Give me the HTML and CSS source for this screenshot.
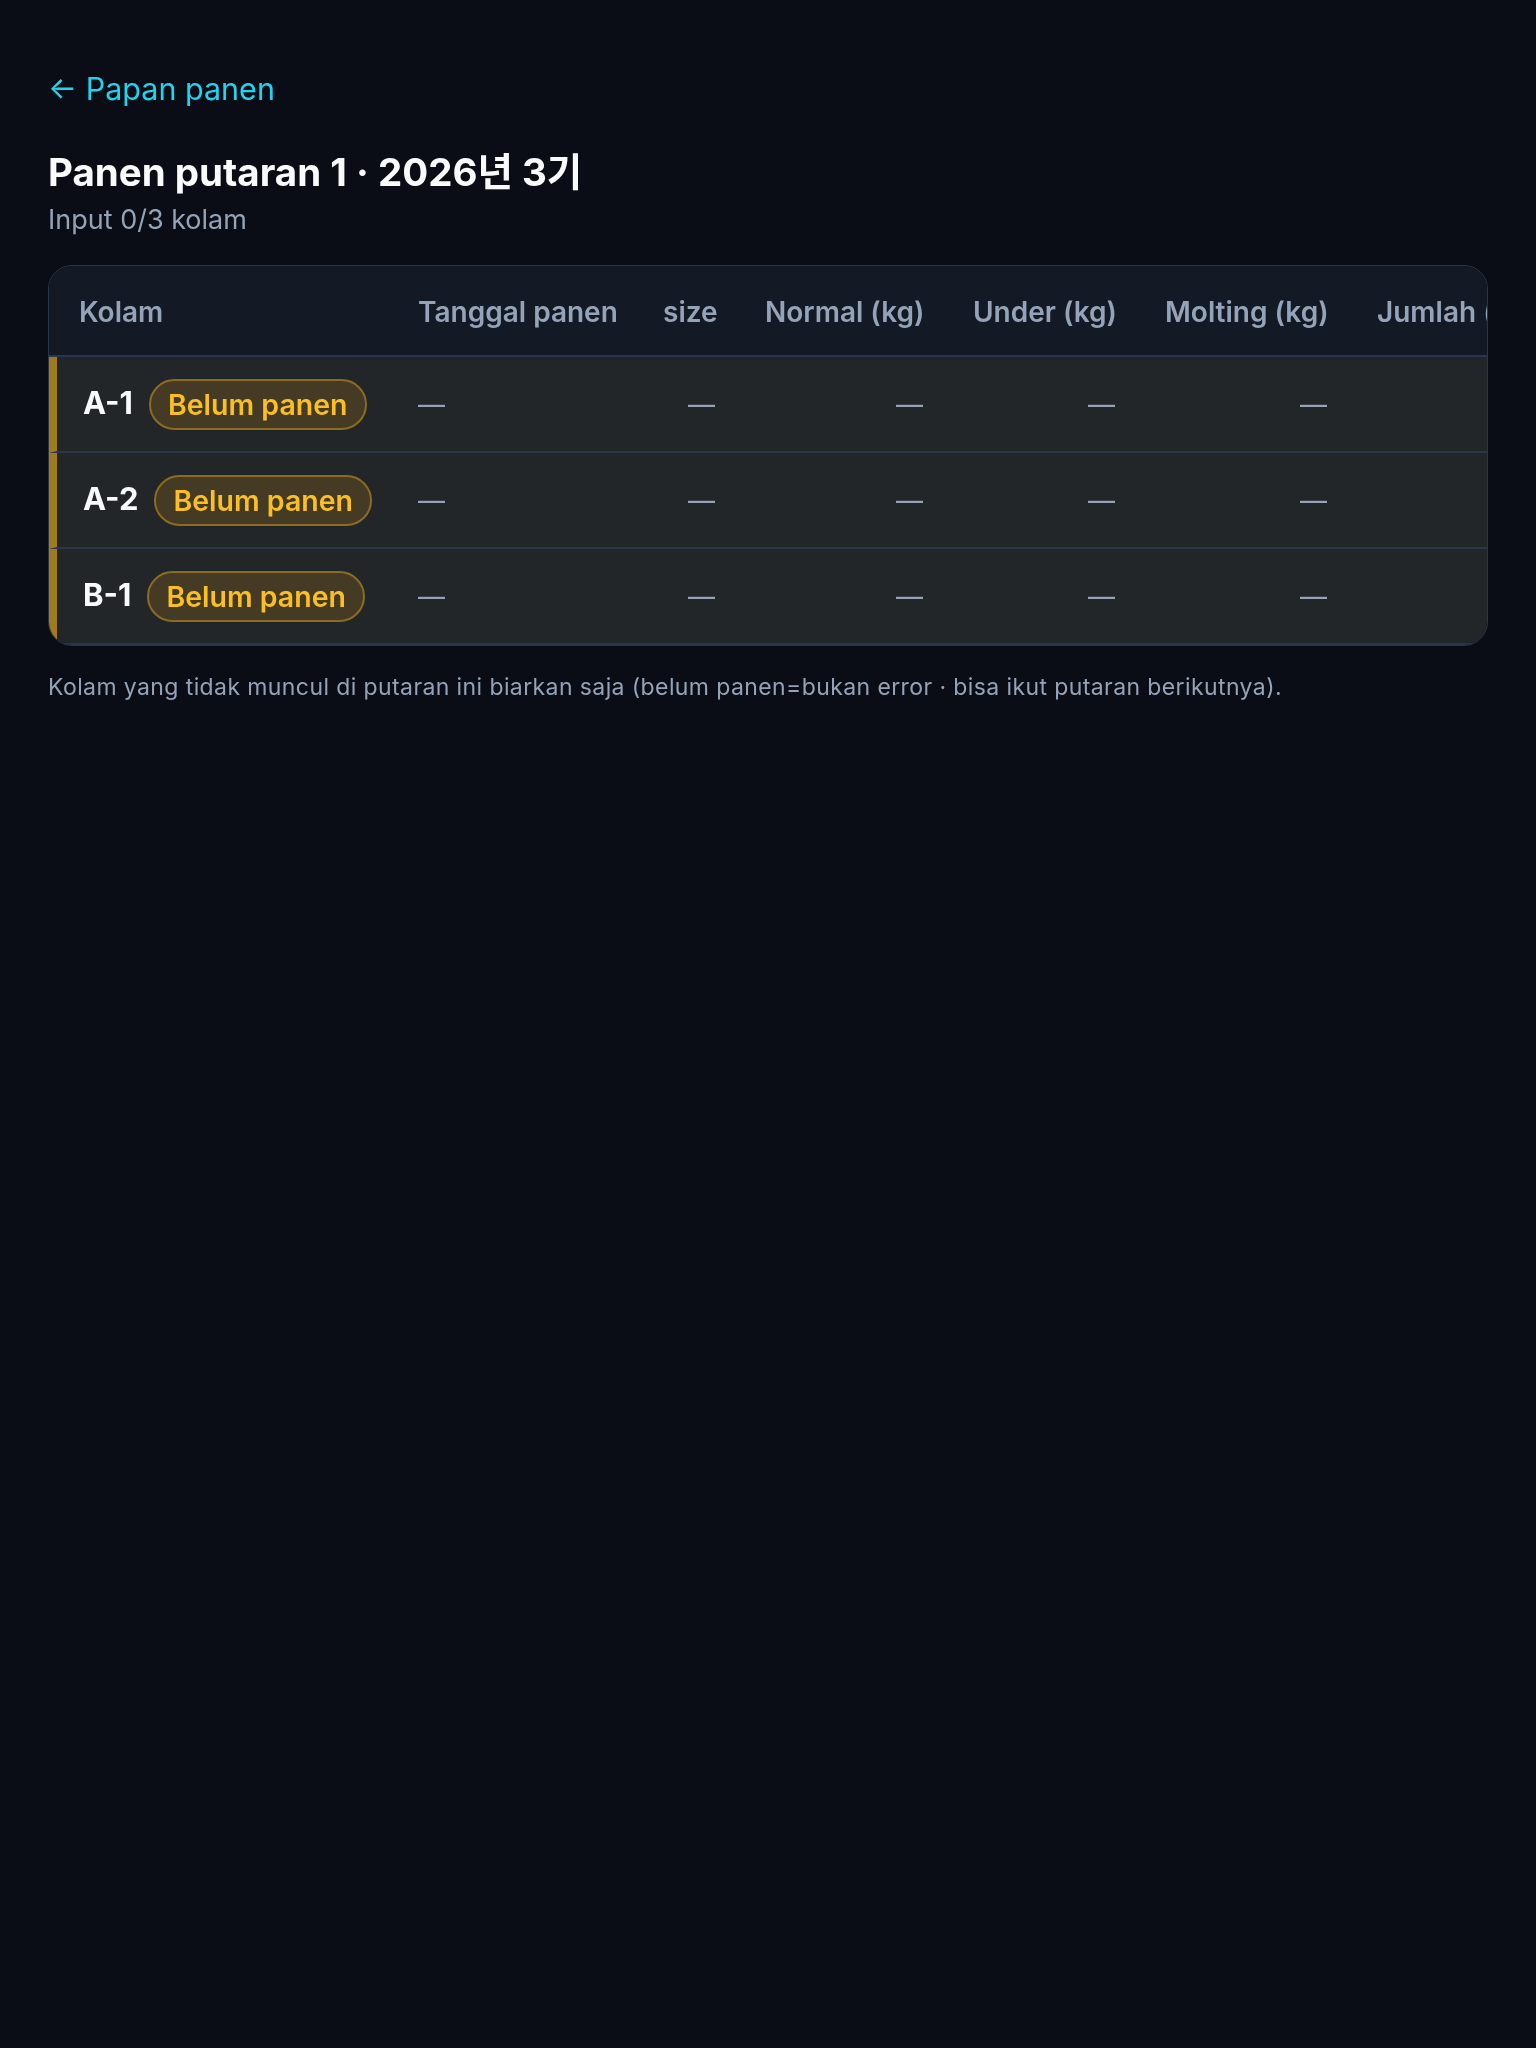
FILE: index.html
```html
<!DOCTYPE html>
<html lang="id">
<head>
  <meta charset="UTF-8">
  <title>Panen putaran 1</title>
  <link rel="stylesheet" href="styles.css">
</head>
<body>

  <main class="page">
    <!-- Back link -->
    <a class="back-link" href="#">&larr; Papan panen</a>

    <!-- Title -->
    <h1 class="page-title">Panen putaran 1 · 2026년 3기</h1>
    <p class="page-sub">Input 0/3 kolam</p>

    <!-- Harvest table -->
    <div class="table-card">
      <table class="harvest-table">
        <thead>
          <tr>
            <th class="col-pond">Kolam</th>
            <th class="col-date">Tanggal panen</th>
            <th class="col-size num">size</th>
            <th class="col-normal num">Normal (kg)</th>
            <th class="col-under num">Under (kg)</th>
            <th class="col-molting num">Molting (kg)</th>
            <th class="col-count">Jumlah (ekor)</th>
            <th class="col-note">Catatan</th>
          </tr>
        </thead>
        <tbody>
          <tr>
            <td class="col-pond">
              <div class="pond"><span class="pond-name">A-1</span><span class="badge">Belum panen</span></div>
            </td>
            <td class="dash">—</td>
            <td class="dash num">—</td>
            <td class="dash num">—</td>
            <td class="dash num">—</td>
            <td class="dash num">—</td>
            <td class="dash num">—</td>
            <td class="dash">—</td>
          </tr>
          <tr>
            <td class="col-pond">
              <div class="pond"><span class="pond-name">A-2</span><span class="badge">Belum panen</span></div>
            </td>
            <td class="dash">—</td>
            <td class="dash num">—</td>
            <td class="dash num">—</td>
            <td class="dash num">—</td>
            <td class="dash num">—</td>
            <td class="dash num">—</td>
            <td class="dash">—</td>
          </tr>
          <tr>
            <td class="col-pond">
              <div class="pond"><span class="pond-name">B-1</span><span class="badge">Belum panen</span></div>
            </td>
            <td class="dash">—</td>
            <td class="dash num">—</td>
            <td class="dash num">—</td>
            <td class="dash num">—</td>
            <td class="dash num">—</td>
            <td class="dash num">—</td>
            <td class="dash">—</td>
          </tr>
        </tbody>
      </table>
    </div>

    <p class="footnote">Kolam yang tidak muncul di putaran ini biarkan saja (belum panen=bukan error · bisa ikut putaran berikutnya).</p>
  </main>

</body>
</html>
```

FILE: styles.css
```css
body {
  margin: 0;
  background: #0a0d15;
  font-family: Inter, "Noto Sans CJK KR", sans-serif;
  color: #f1f5f9;
}

.page {
  padding: 69px 48px 48px;
}

.back-link {
  display: block;
  font-size: 30.5px;
  line-height: 40px;
  color: #22d3ee;
  text-decoration: none;
}

.page-title {
  margin: 41px 0 0;
  font-size: 38.5px;
  line-height: 44px;
  font-weight: 700;
  color: #f8fafc;
}

.page-sub {
  margin: 8px 0 0;
  font-size: 27px;
  line-height: 36px;
  color: #94a3b8;
}

/* table card */
.table-card {
  margin-top: 27px;
  border: 1px solid #2a3649;
  border-radius: 24px;
  overflow-x: auto;
  scrollbar-width: none;
  background: #222628;
}

.table-card::-webkit-scrollbar {
  display: none;
}

.harvest-table {
  table-layout: fixed;
  width: 1833px;
  border-collapse: separate;
  border-spacing: 0;
  white-space: nowrap;
}

.harvest-table th,
.harvest-table td {
  box-sizing: border-box;
  padding: 0 25px;
  text-align: left;
  overflow: hidden;
}

.harvest-table th {
  height: 91px;
  padding-top: 2px;
  background: #131a26;
  border-bottom: 2px solid #2a3649;
  font-size: 28px;
  font-weight: 600;
  color: #94a3b8;
}

.harvest-table td {
  height: 96px;
  background: #222628;
  border-bottom: 2px solid #2a3649;
}

.harvest-table .num {
  text-align: right;
}

th.col-pond {
  padding-left: 30px;
}

td.col-pond {
  border-left: 8px solid #a07a1e;
  padding-left: 26px;
}

.col-pond { width: 344px; }
.col-date { width: 245px; }
.col-size { width: 102px; }
.col-normal { width: 208px; }
.col-under { width: 192px; }
.col-molting { width: 212px; }
.col-count { width: 230px; }
.col-note { width: 300px; }

.pond {
  display: flex;
  align-items: center;
  gap: 16px;
}

.pond-name {
  font-size: 31px;
  font-weight: 700;
  color: #f8fafc;
  margin-top: -4px;
}

.badge {
  display: inline-flex;
  align-items: center;
  box-sizing: border-box;
  height: 51px;
  padding: 0 17px;
  border: 2px solid #8a6c22;
  border-radius: 999px;
  background: #453b25;
  color: #fbbf24;
  font-size: 28.5px;
  font-weight: 600;
}

.dash {
  font-size: 27px;
  color: #94a3b8;
}

.footnote {
  margin: 26px 0 0;
  font-size: 23px;
  letter-spacing: 0.4px;
  line-height: 30px;
  color: #94a3b8;
}
```
